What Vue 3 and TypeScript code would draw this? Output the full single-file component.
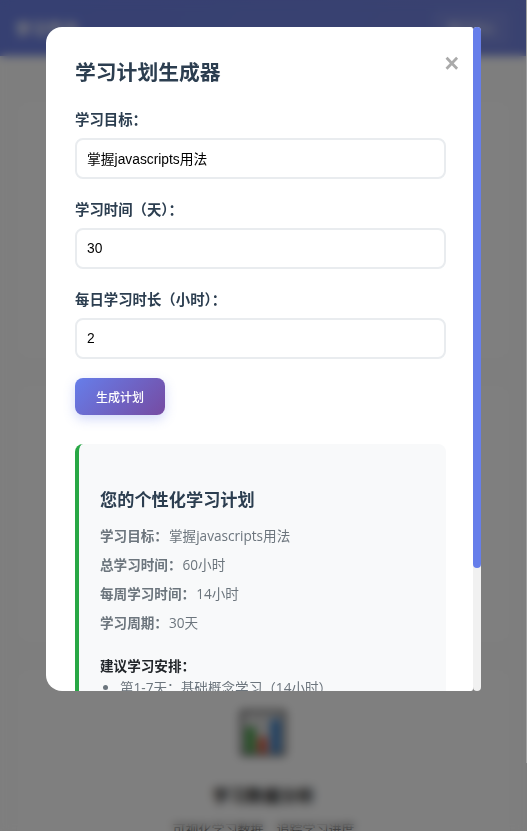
<script setup lang="ts">
const planStats = [
  { label: '学习目标\uFF1A', value: '掌握javascripts用法' },
  { label: '总学习时间\uFF1A', value: '60小时' },
  { label: '每周学习时间\uFF1A', value: '14小时' },
  { label: '学习周期\uFF1A', value: '30天' },
]
const schedule = ['第1-7天\uFF1A基础概念学习\uFF0814小时\uFF09']
</script>

<template>
  <div class="page">
    <header class="topbar">
      <span class="brand">学习平台</span>
      <span class="user">用户中心</span>
    </header>
    <main class="cards">
      <section class="card card-tall"></section>
      <section class="card card-tall"></section>
      <section class="card card-stats">
        <svg class="chart" viewBox="0 0 46 46" aria-hidden="true">
          <rect x="1" y="1" width="44" height="44" rx="3" fill="#d8d8d8" stroke="#444" stroke-width="3" />
          <rect x="6" y="17" width="9" height="26" fill="#3c9a3c" />
          <rect x="18" y="27" width="9" height="16" fill="#d0523a" />
          <rect x="31" y="9" width="9" height="34" fill="#2f78c4" />
        </svg>
        <h3>学习数据分析</h3>
        <p>可视化学习数据&#xFF0C;追踪学习进度</p>
      </section>
    </main>

    <div class="overlay">
      <div class="edge"></div>
      <div class="modal">
        <div class="sheet">
          <button class="close" type="button">×</button>
          <h2>学习计划生成器</h2>
          <div class="field">
            <label>学习目标&#xFF1A;</label>
            <input type="text" value="掌握javascripts用法" />
          </div>
          <div class="field">
            <label>学习时间&#xFF08;天&#xFF09;&#xFF1A;</label>
            <input type="text" value="30" />
          </div>
          <div class="field">
            <label>每日学习时长&#xFF08;小时&#xFF09;&#xFF1A;</label>
            <input type="text" value="2" />
          </div>
          <button class="generate" type="button">生成计划</button>
          <div class="result">
            <h3>您的个性化学习计划</h3>
            <p v-for="s in planStats" :key="s.label"><strong>{{ s.label }}</strong>{{ s.value }}</p>
            <h4>建议学习安排&#xFF1A;</h4>
            <ul>
              <li v-for="item in schedule" :key="item">{{ item }}</li>
            </ul>
          </div>
        </div>
        <div class="rail"><div class="thumb"></div></div>
      </div>
    </div>
  </div>
</template>

<style>
html, body { margin: 0; overflow: hidden; }
</style>

<style scoped>
.page {
  position: relative;
  height: 831px;
  overflow: hidden;
  background: #fdfdfd;
  font-family: "Open Sans", "Noto Sans CJK SC", sans-serif;
}
.topbar {
  height: 56px;
  box-sizing: border-box;
  padding: 0 18px 0 15px;
  display: flex;
  align-items: center;
  justify-content: space-between;
  background: linear-gradient(135deg, #6c80e4, #7484e0);
  color: #fff;
  font-size: 16px;
  font-weight: 700;
}
.user { font-size: 12px; font-weight: 400; padding: 8px 14px; background: rgba(255, 255, 255, 0.08); border-radius: 6px; }
.cards {
  padding: 44px 16px 0;
  display: flex;
  flex-direction: column;
  gap: 24px;
}
.card {
  background: #fff;
  border: 1px solid #f4f4f4;
  border-radius: 10px;
  text-align: center;
  box-sizing: border-box;
}
.card-tall { height: 260px; }
.card-stats { height: 300px; padding-top: 41px; }
.chart { display: block; width: 46px; height: 46px; margin: 0 auto 26px 223px; }
.card h3 { margin: 0 0 12px; font-size: 17px; color: #222; }
.card p { margin: 0; font-size: 13px; color: #333; }

.overlay {
  position: fixed;
  inset: 0;
  background: rgba(0, 0, 0, 0.5);
  backdrop-filter: blur(5px);
  display: flex;
  justify-content: center;
  align-items: flex-start;
  padding-top: 27px;
  box-sizing: border-box;
}
.edge {
  position: absolute;
  top: 0;
  right: 0;
  width: 1px;
  height: 763px;
  background: #a0a0a0;
}
.modal {
  display: flex;
  width: 435px;
  height: 664px;
}
.sheet {
  position: relative;
  flex: 1;
  min-width: 0;
  box-sizing: border-box;
  padding: 29px 27px 0 29px;
  background: #fff;
  border-radius: 16px 2px 2px 16px;
  overflow: hidden;
  color: #2c3e50;
}
.rail {
  width: 8px;
  flex: none;
  background: #f1f1f1;
  border-radius: 4px;
}
.thumb {
  height: 541px;
  background: #667eea;
  border-radius: 4px;
}
.close {
  position: absolute;
  top: 20px;
  right: 14px;
  padding: 0;
  border: 0;
  background: none;
  color: #aaa;
  font-family: "Liberation Sans", sans-serif;
  font-size: 25px;
  font-weight: 700;
  line-height: 32px;
}
h2 {
  margin: 0 0 20px;
  font-size: 20.8px;
  line-height: 32px;
  font-weight: 700;
}
.field { margin-bottom: 19px; }
label {
  display: block;
  margin-bottom: 6px;
  font-size: 14.4px;
  font-weight: 600;
  line-height: 24px;
}
input {
  display: block;
  width: 100%;
  height: 41px;
  box-sizing: border-box;
  padding: 0 10px 1px;
  border: 2px solid #e9ecef;
  border-radius: 8px;
  background: #fff;
  color: #000;
  font-family: "Liberation Sans", "Noto Sans CJK SC", sans-serif;
  font-size: 13.8px;
}
.generate {
  display: block;
  width: 90px;
  height: 37px;
  padding: 0;
  border: 0;
  border-radius: 8px;
  background: linear-gradient(135deg, #667eea, #764ba2);
  box-shadow: 0 4px 12px rgba(102, 126, 234, 0.3);
  color: #fff;
  font-family: inherit;
  font-size: 12px;
  font-weight: 500;
}
.result {
  margin-top: 29px;
  padding: 29px 21px 21px;
  background: #f8f9fa;
  border-left: 4px solid #28a745;
  border-radius: 8px;
}
.result h3 {
  margin: 14px 0 12px;
  font-size: 17.2px;
  line-height: 26px;
  font-weight: 700;
}
.result p {
  margin: 0 0 8px;
  font-size: 13.6px;
  line-height: 21px;
  color: #6c757d;
}
.result strong { font-weight: 700; margin-right: 1px; }
.result h4 {
  margin: 22px 0 0;
  font-size: 13.6px;
  line-height: 21px;
  font-weight: 700;
  color: #212529;
}
ul {
  margin: 0;
  padding-left: 20px;
  font-size: 13.6px;
  line-height: 23px;
  color: #6c757d;
}
</style>
